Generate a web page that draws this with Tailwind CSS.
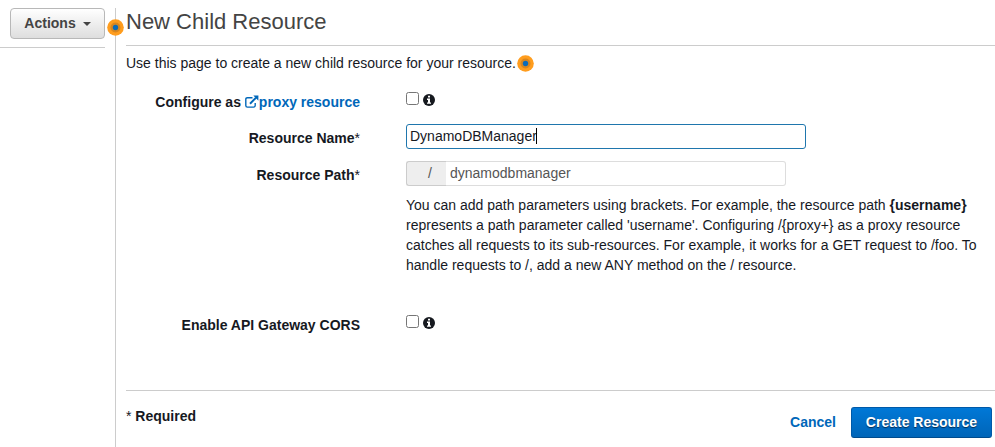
<!DOCTYPE html>
<html lang="en">
<head>
<meta charset="utf-8">
<title>New Child Resource</title>
<script src="https://cdn.jsdelivr.net/npm/@tailwindcss/browser@4"></script>
</head>
<body class="w-[995px] h-[447px] overflow-hidden bg-white font-['Liberation_Sans',Arial,sans-serif] text-sm leading-5 text-[#16191f]">
<div class="flex h-full pt-2">
  <aside class="w-[115px] shrink-0 pr-[10px]">
    <div class="flex h-10 justify-end border-b border-[#ccc]">
      <button class="flex h-[31px] w-[95px] items-center justify-center gap-[7px] rounded-[4px] border border-[#b8b8b8] bg-linear-to-b from-white to-[#dedede] pb-px font-bold text-[#444]">Actions
        <svg class="mt-[2px] h-1 w-2" viewBox="0 0 8 4" fill="#444"><path d="M0 0h8L4 4z"/></svg>
      </button>
    </div>
  </aside>
  <main class="relative flex flex-1 flex-col border-l border-[#ccc] pl-[10px]">
    <svg class="absolute -left-[9px] top-[11px] size-[17px]" viewBox="0 0 17 17"><circle cx="8.5" cy="8.5" r="8.3" fill="#ff9d1e"/><circle cx="8.5" cy="8.5" r="5" fill="#d8861f"/><circle cx="8.5" cy="8.5" r="2.7" fill="#0c6bb8"/></svg>
    <h1 class="h-[38px] shrink-0 border-b border-[#ccc] text-[22px] leading-[27px] text-[#444]">New Child Resource</h1>
    <p class="mt-[7px] flex h-5 shrink-0 items-center gap-px">Use this page to create a new child resource for your resource.
      <svg class="size-[17px]" viewBox="0 0 17 17"><circle cx="8.5" cy="8.5" r="8.3" fill="#ff9d1e"/><circle cx="8.5" cy="8.5" r="5" fill="#d8861f"/><circle cx="8.5" cy="8.5" r="2.7" fill="#0c6bb8"/></svg>
    </p>
    <form class="mt-[18px] grid shrink-0 grid-cols-[234px_1fr] grid-rows-[33px_37px_37px_118px_74px] gap-x-[46px]">
      <div class="flex h-5 items-center justify-end pt-[2px] font-bold">Configure as&nbsp;<svg class="h-[14px] w-[14px]" viewBox="0 0 14 14" fill="none" stroke="#0067b9" stroke-width="1.4"><path d="M7.5 2.7H2.4Q.8 2.7.8 4.3v6.2q0 1.6 1.6 1.6h6.2q1.6 0 1.6-1.6V8"/><path d="M5 8.7 11 2.7" stroke-width="2"/><path d="M8.3.6h5.1v5.1z" fill="#0067b9" stroke="none"/></svg><a class="text-[#0067b9]">proxy resource</a></div>
      <div class="flex gap-1 pt-[1px]">
        <input type="checkbox" class="size-[13px] appearance-none rounded-[2.5px] border border-[#767676] bg-white">
        <svg class="mt-[2px] size-3" viewBox="0 0 12 12"><circle cx="6" cy="6" r="6" fill="#16191f"/><path d="M5 1.8h2v1.7H5zM4 4.6h3v3.9h1v1.3H4V8.5h1V5.9H4z" fill="#fff"/></svg>
      </div>
      <label class="pt-[4px] text-right font-bold">Resource Name<span class="font-normal">*</span></label>
      <div class="flex h-[25px] w-[400px] items-center rounded-[3px] border border-[#1f76ad] pb-px pl-[3px]"><span>DynamoDBManager</span><span class="-ml-px h-4 w-px bg-black"></span></div>
      <label class="pt-[4px] text-right font-bold">Resource Path<span class="font-normal">*</span></label>
      <div class="flex h-[25px] w-[380px] text-[#555]"><span class="flex w-10 items-center justify-end rounded-l-[3px] border border-r-0 border-[#ccc] bg-[#eee] pr-[14px] pb-px">/</span><span class="flex flex-1 items-center rounded-r-[3px] border border-l-0 border-[#ddd] pb-px pl-1">dynamodbmanager</span></div>
      <div></div>
      <p class="-mt-[3px] whitespace-nowrap">You can add path parameters using brackets. For example, the resource path <b>{username}</b><br>represents a path parameter called 'username'. Configuring /{proxy+} as a proxy resource<br>catches all requests to its sub-resources. For example, it works for a GET request to /foo. To<br>handle requests to /, add a new ANY method on the / resource.</p>
      <label class="-mt-px text-right font-bold">Enable API Gateway CORS</label>
      <div class="-mt-px flex gap-1">
        <input type="checkbox" class="size-[13px] appearance-none rounded-[2.5px] border border-[#767676] bg-white">
        <svg class="mt-[2px] size-3" viewBox="0 0 12 12"><circle cx="6" cy="6" r="6" fill="#16191f"/><path d="M5 1.8h2v1.7H5zM4 4.6h3v3.9h1v1.3H4V8.5h1V5.9H4z" fill="#fff"/></svg>
      </div>
    </form>
    <footer class="flex shrink-0 justify-between border-t border-[#ccc] pr-[3px]">
      <div class="pt-[15px] font-bold"><span class="font-normal">*</span> Required</div>
      <div class="flex items-center gap-[15px] pt-4 font-bold"><a class="pb-px text-[#0067b9]">Cancel</a><button class="h-[31px] w-[141px] rounded-[3px] border border-[#0059a8] border-b-[#004b8d] bg-linear-to-b from-[#0078d7] to-[#0065b8] pb-px text-white [text-shadow:0_1px_1px_#002b52]">Create Resource</button></div>
    </footer>
  </main>
</div>
</body>
</html>
